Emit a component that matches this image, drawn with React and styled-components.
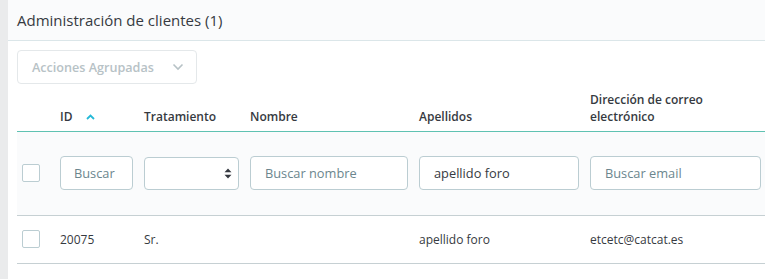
import React from "react";
import styled, { createGlobalStyle } from "styled-components";

const Global = createGlobalStyle`
  html, body { margin: 0; padding: 0; background: #eaebec; overflow: hidden; }
  body { font-family: "Open Sans", "Noto Sans", sans-serif; color: #363a41; }
  * { box-sizing: border-box; }
`;

const Page = styled.div`
  padding-left: 8px;
  width: 765px;
`;

const Panel = styled.section`
  background: #fff;
  min-height: 279px;
  overflow: hidden;
`;

const PanelHeader = styled.header`
  height: 41px;
  background: #fafbfc;
  border-bottom: 1px solid #dbe6e9;
  display: flex;
  align-items: center;
  padding-left: 9px;
  font-size: 15px;
  font-weight: 400;
  color: #363a41;
`;

const Body = styled.div`
  padding: 9px 0 0 9px;
`;

const BulkButton = styled.button`
  width: 180px;
  height: 34px;
  border: 1px solid #e4e8ea;
  border-radius: 4px;
  background: #fff;
  display: flex;
  align-items: center;
  gap: 18px;
  padding: 0 0 0 14px;
  font-family: inherit;
  font-size: 12.6px;
  font-weight: 600;
  color: #b7c2c6;
  cursor: default;
`;

const Table = styled.table`
  border-collapse: collapse;
  table-layout: fixed;
  width: 750px;
`;

const Th = styled.th`
  height: 47px;
  vertical-align: bottom;
  text-align: left;
  padding: 0 5px 6px 5px;
  font-size: 12px;
  font-weight: 600;
  line-height: 17px;
  color: #363a41;
  border-bottom: 1px solid #5fc2b2;
`;

const FilterRow = styled.tr`
  background: #fafbfc;
  border-bottom: 1px solid #c6d0d3;
`;

const DataRow = styled.tr`
  border-bottom: 1px solid #c6d0d3;
`;

const Td = styled.td`
  height: ${(p) => p.$h}px;
  padding: 0 6px 0 5px;
  vertical-align: middle;
  font-size: 12px;
  color: #363a41;
`;

const Check = styled.span`
  display: block;
  width: 18px;
  height: 18px;
  border: 1px solid #bbcdd2;
  border-radius: 2px;
  background: #fff;
`;

const Input = styled.input`
  width: 100%;
  height: 34px;
  border: 1px solid #bbcdd2;
  border-radius: 4px;
  background: #fff;
  padding: 0 14px;
  font-family: inherit;
  font-size: 12.8px;
  color: #363a41;
  outline: none;
  &::placeholder { color: #6c868e; opacity: 1; }
`;

const SelectBox = styled.div`
  height: 33px;
  border: 1px solid #bbcdd2;
  border-radius: 4px;
  background: #fff;
  display: flex;
  align-items: center;
  justify-content: flex-end;
  padding-right: 6px;
`;

const SortCaret = styled.svg`
  margin-left: 14px;
  vertical-align: 1px;
`;

export default function App() {
  return (
    <Page>
      <Global />
      <Panel>
        <PanelHeader>Administración de clientes (1)</PanelHeader>
        <Body>
          <BulkButton>
            Acciones Agrupadas
            <svg width="12" height="8" viewBox="0 0 12 8">
              <path d="M1.5 1.5 L6 6 L10.5 1.5" fill="none" stroke="#b7c2c6" strokeWidth="1.6" />
            </svg>
          </BulkButton>
          <Table>
            <colgroup>
              <col style={{ width: 38 }} />
              <col style={{ width: 84 }} />
              <col style={{ width: 106 }} />
              <col style={{ width: 169 }} />
              <col style={{ width: 171 }} />
              <col style={{ width: 182 }} />
            </colgroup>
            <thead>
              <tr>
                <Th />
                <Th>
                  ID
                  <SortCaret width="9" height="6" viewBox="0 0 9 6">
                    <path d="M1 5 L4.5 1.5 L8 5" fill="none" stroke="#25b9d7" strokeWidth="1.8" />
                  </SortCaret>
                </Th>
                <Th>Tratamiento</Th>
                <Th>Nombre</Th>
                <Th>Apellidos</Th>
                <Th>
                  Dirección de correo
                  <br />
                  electrónico
                </Th>
              </tr>
            </thead>
            <tbody>
              <FilterRow>
                <Td $h={84}><Check /></Td>
                <Td $h={84}><Input placeholder="Buscar" style={{ paddingLeft: 13 }} /></Td>
                <Td $h={84}>
                  <SelectBox>
                    <svg width="8" height="11" viewBox="0 0 8 11">
                      <path d="M4 0.5 L7.5 4.3 H0.5 Z M4 10.5 L7.5 6.7 H0.5 Z" fill="#363a41" />
                    </svg>
                  </SelectBox>
                </Td>
                <Td $h={84}><Input placeholder="Buscar nombre" /></Td>
                <Td $h={84}><Input defaultValue="apellido foro" /></Td>
                <Td $h={84}><Input placeholder="Buscar email" /></Td>
              </FilterRow>
              <DataRow>
                <Td $h={48}><Check /></Td>
                <Td $h={48}>20075</Td>
                <Td $h={48}>Sr.</Td>
                <Td $h={48}></Td>
                <Td $h={48}>apellido foro</Td>
                <Td $h={48}>etcetc@catcat.es</Td>
              </DataRow>
            </tbody>
          </Table>
        </Body>
      </Panel>
    </Page>
  );
}
